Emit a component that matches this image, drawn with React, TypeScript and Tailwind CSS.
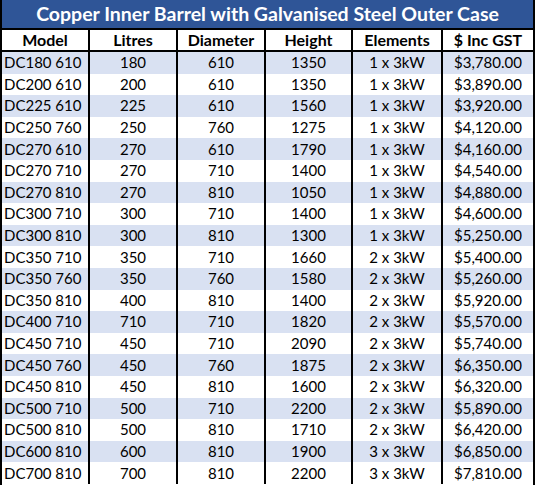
import React from "react";

const rows: string[][] = [
  ["DC180 610", "180", "610", "1350", "1 x 3kW", "$3,780.00"],
  ["DC200 610", "200", "610", "1350", "1 x 3kW", "$3,890.00"],
  ["DC225 610", "225", "610", "1560", "1 x 3kW", "$3,920.00"],
  ["DC250 760", "250", "760", "1275", "1 x 3kW", "$4,120.00"],
  ["DC270 610", "270", "610", "1790", "1 x 3kW", "$4,160.00"],
  ["DC270 710", "270", "710", "1400", "1 x 3kW", "$4,540.00"],
  ["DC270 810", "270", "810", "1050", "1 x 3kW", "$4,880.00"],
  ["DC300 710", "300", "710", "1400", "1 x 3kW", "$4,600.00"],
  ["DC300 810", "300", "810", "1300", "1 x 3kW", "$5,250.00"],
  ["DC350 710", "350", "710", "1660", "2 x 3kW", "$5,400.00"],
  ["DC350 760", "350", "760", "1580", "2 x 3kW", "$5,260.00"],
  ["DC350 810", "400", "810", "1400", "2 x 3kW", "$5,920.00"],
  ["DC400 710", "710", "710", "1820", "2 x 3kW", "$5,570.00"],
  ["DC450 710", "450", "710", "2090", "2 x 3kW", "$5,740.00"],
  ["DC450 760", "450", "760", "1875", "2 x 3kW", "$6,350.00"],
  ["DC450 810", "450", "810", "1600", "2 x 3kW", "$6,320.00"],
  ["DC500 710", "500", "710", "2200", "2 x 3kW", "$5,890.00"],
  ["DC500 810", "500", "810", "1710", "2 x 3kW", "$6,420.00"],
  ["DC600 810", "600", "810", "1900", "3 x 3kW", "$6,850.00"],
  ["DC700 810", "700", "810", "2200", "3 x 3kW", "$7,810.00"],
];

const headers = ["Model", "Litres", "Diameter", "Height", "Elements", "$ Inc GST"];
const gridCols = "grid grid-cols-[88px_88px_88px_87px_90px_90px]";

export default function App() {
  return (
    <div
      className="w-[535px] h-[485px] overflow-hidden bg-white text-black border-l-2 border-r-2 border-black"
      style={{ fontFamily: "Lato, 'Open Sans', sans-serif" }}
    >
      <div className="h-[30px] bg-[#2f5597] border-b-2 border-black flex items-center justify-center text-white font-bold text-[19.5px] leading-none">
        Copper Inner Barrel with Galvanised Steel Outer Case
      </div>
      <div className={`${gridCols} h-[22px] border-b-2 border-black font-bold text-[16px]`}>
        {headers.map((h, i) => (
          <div
            key={h}
            className={`flex items-center justify-center leading-none ${i < 5 ? "border-r-2 border-black" : ""}`}
          >
            {h}
          </div>
        ))}
      </div>
      {rows.map((r, ri) => (
        <div
          key={r[0]}
          className={`${gridCols} h-[21.6px] text-[15px] ${ri % 2 === 0 ? "bg-[#d9e1f2]" : "bg-white"}`}
        >
          {r.map((c, i) => (
            <div
              key={i}
              className={`flex items-center leading-none ${i === 0 ? "justify-start pl-[2px]" : "justify-center"} ${i < 5 ? "border-r-2 border-black" : ""}`}
            >
              {c}
            </div>
          ))}
        </div>
      ))}
    </div>
  );
}
